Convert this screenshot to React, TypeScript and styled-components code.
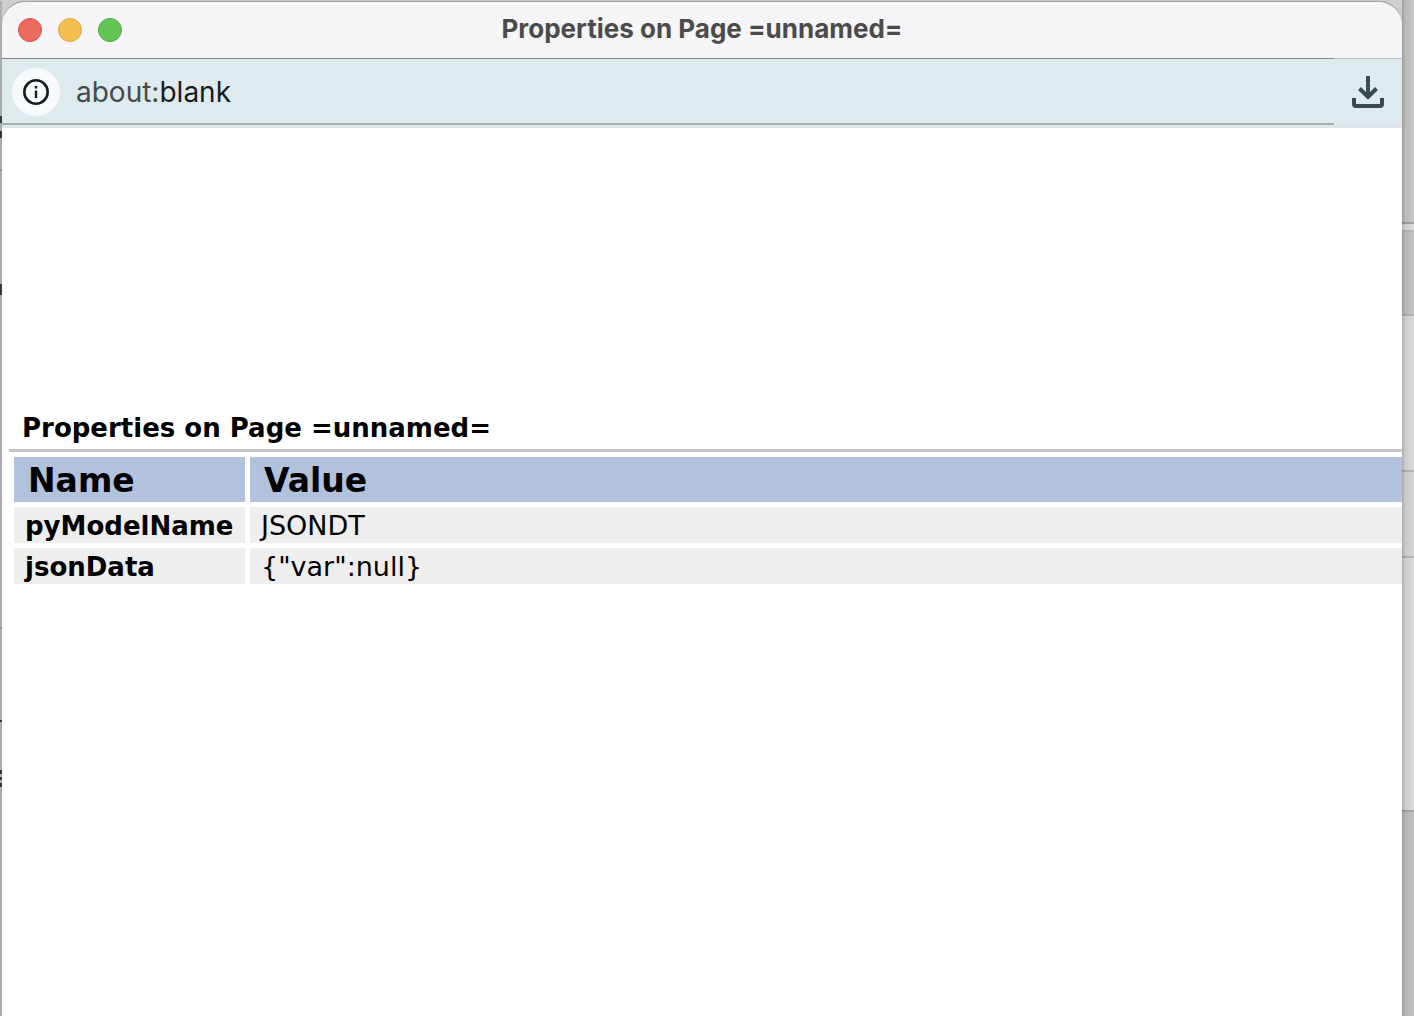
import React from 'react';
import styled, { createGlobalStyle } from 'styled-components';

const GlobalStyle = createGlobalStyle`
  *, *::before, *::after { box-sizing: border-box; }
  body { margin: 0; background: #cdcdcd; overflow: hidden; }
`;

const Desktop = styled.div`
  display: grid;
  grid-template-columns: 2px minmax(0, 1fr) 12px;
  min-height: 100vh;
  padding-top: 1px;
  background: #cfcfcf;
`;

const LeftEdge = styled.div`
  background: #aeaeae;
  display: flex;
  flex-direction: column;
`;

const Mark = styled.span<{ $gap: number; $size: number; $color?: string }>`
  margin-top: ${p => p.$gap}px;
  height: ${p => p.$size}px;
  background: ${p => p.$color || '#333333'};
`;

const RightEdge = styled.div`
  display: flex;
  flex-direction: column;
  margin-top: -1px;
  position: relative;
  &::after {
    content: '';
    position: absolute;
    inset: 0;
    background: linear-gradient(90deg, rgba(0, 0, 0, 0.22), rgba(0, 0, 0, 0.08) 3px, rgba(0, 0, 0, 0));
  }
`;

const Band = styled.span<{ $height?: number; $color: string }>`
  flex: ${p => (p.$height ? `0 0 ${p.$height}px` : '1')};
  background: ${p => p.$color};
`;

const Window = styled.main`
  display: flex;
  flex-direction: column;
  overflow: hidden;
  background: #ffffff;
  border-top: 1px solid #a6a6a6;
  border-radius: 24px 24px 0 0;
  box-shadow: 0 0 1px #777777;
`;

const TitleBar = styled.header`
  display: grid;
  grid-template-columns: 1fr auto 1fr;
  align-items: center;
  height: 56px;
  padding: 0 16px;
  background: #f5f5f7;
`;

const Lights = styled.div`
  display: flex;
  gap: 16px;
`;

const Light = styled.button<{ $fill: string; $edge: string }>`
  width: 24px;
  height: 24px;
  padding: 0;
  border: 1px solid ${p => p.$edge};
  border-radius: 50%;
  background: ${p => p.$fill};
`;

const WindowTitle = styled.div`
  padding-bottom: 2px;
  font: 700 26px/32px Inter, sans-serif;
  color: #4b4b4b;
`;

const Toolbar = styled.div`
  display: flex;
  height: 70px;
  background: #deeaee;
  border-bottom: 3px solid #dce5e7;
`;

const AddressBar = styled.div`
  flex: 1;
  display: flex;
  align-items: center;
  gap: 16px;
  height: 67px;
  padding: 2px 0 0 10px;
  border-top: 1px solid #85898b;
  border-bottom: 2px solid #a7adb0;
`;

const InfoButton = styled.button`
  display: grid;
  place-items: center;
  width: 48px;
  height: 48px;
  padding: 0;
  border: 0;
  border-radius: 50%;
  background: #f7fafb;
  color: #171d1e;
`;

const Address = styled.div`
  font: 400 28px/34px Inter, sans-serif;
  color: #171d1e;
`;

const Scheme = styled.span`
  color: #454b4c;
`;

const DownloadButton = styled.button`
  display: grid;
  place-items: center;
  width: 68px;
  padding: 0;
  border: 0;
  border-top: 1px solid #b4c3c8;
  background: transparent;
  color: #374b4f;
`;

const Page = styled.section`
  flex: 1;
  padding: 283px 0 0 7px;
  font-family: Verdana, 'DejaVu Sans', sans-serif;
  color: #000000;
`;

const Heading = styled.h1`
  margin: 0;
  padding: 0 0 3px 13px;
  border-bottom: 3px solid #c3c3c3;
  font-size: 26px;
  line-height: 35px;
  font-weight: 700;
`;

/* The last column runs on to the window's edge, past the cell spacing. */
const Properties = styled.table`
  width: calc(100% + 5px);
  border-collapse: separate;
  border-spacing: 5px;
  line-height: 34px;
  text-align: left;
`;

const HeadCell = styled.th`
  padding: 2px 14px 0;
  background: #b2c2dc;
  font-size: 33px;
  line-height: 43px;
`;

const NameCell = styled.th`
  width: 231px;
  padding: 2px 11px 0;
  background: #eeeeee;
  font-size: 26px;
  white-space: nowrap;
`;

const ValueCell = styled.td`
  padding: 2px 11px 0;
  background: #eeeeee;
  font-size: 27px;
`;

const rows = [
  { name: 'pyModelName', value: 'JSONDT' },
  { name: 'jsonData', value: '{"var":null}' },
];

export default function App() {
  return (
    <>
      <GlobalStyle />
      <Desktop>
        <LeftEdge>
          <Mark $gap={115} $size={7} />
          <Mark $gap={8} $size={7} />
          <Mark $gap={31} $size={2} $color="#8e8e8e" />
          <Mark $gap={113} $size={11} />
          <Mark $gap={332} $size={2} $color="#8e8e8e" />
          <Mark $gap={91} $size={2} />
          <Mark $gap={48} $size={4} />
          <Mark $gap={3} $size={3} />
          <Mark $gap={3} $size={4} />
        </LeftEdge>
        <Window>
          <TitleBar>
            <Lights>
              <Light aria-label="Close" $fill="#ed6a5e" $edge="#d55549" />
              <Light aria-label="Minimize" $fill="#f5bf4f" $edge="#dca63d" />
              <Light aria-label="Zoom" $fill="#62c554" $edge="#4fab42" />
            </Lights>
            <WindowTitle>Properties on Page =unnamed=</WindowTitle>
          </TitleBar>
          <Toolbar>
            <AddressBar>
              <InfoButton aria-label="View site information">
                <svg width="26" height="26" viewBox="0 0 26 26" fill="none" stroke="currentColor">
                  <circle cx="13" cy="13" r="11.7" strokeWidth="2.6" />
                  <path d="M13 11.5V19M13 7v2.5" strokeWidth="2.4" />
                </svg>
              </InfoButton>
              <Address>
                <Scheme>about:</Scheme>blank
              </Address>
            </AddressBar>
            <DownloadButton aria-label="Install">
              <svg width="32" height="32" viewBox="0 0 32 32" fill="none" stroke="currentColor" strokeWidth="4">
                <path d="M16 0v22M7.500 12.500 16 21l8.500-8.500M2 22v6q0 2 2 2h24q2 0 2-2v-6" />
              </svg>
            </DownloadButton>
          </Toolbar>
          <Page>
            <Heading>Properties on Page =unnamed=</Heading>
            <Properties>
              <thead>
                <tr>
                  <HeadCell scope="col">Name</HeadCell>
                  <HeadCell scope="col">Value</HeadCell>
                </tr>
              </thead>
              <tbody>
                {rows.map(row => (
                  <tr key={row.name}>
                    <NameCell scope="row">{row.name}</NameCell>
                    <ValueCell>{row.value}</ValueCell>
                  </tr>
                ))}
              </tbody>
            </Properties>
          </Page>
        </Window>
        <RightEdge>
          <Band $height={222} $color="#c8c8c8" />
          <Band $height={2} $color="#a5a5a5" />
          <Band $height={6} $color="#dedede" />
          <Band $height={2} $color="#bcbcbc" />
          <Band $height={82} $color="#c5c5c5" />
          <Band $height={2} $color="#b2b2b2" />
          <Band $height={154} $color="#dbdbdb" />
          <Band $height={2} $color="#b7b7bc" />
          <Band $height={84} $color="#d8d8d8" />
          <Band $height={2} $color="#b7b7bc" />
          <Band $height={252} $color="#dddddd" />
          <Band $height={2} $color="#a8a8a8" />
          <Band $color="#c3c3c3" />
        </RightEdge>
      </Desktop>
    </>
  );
}
